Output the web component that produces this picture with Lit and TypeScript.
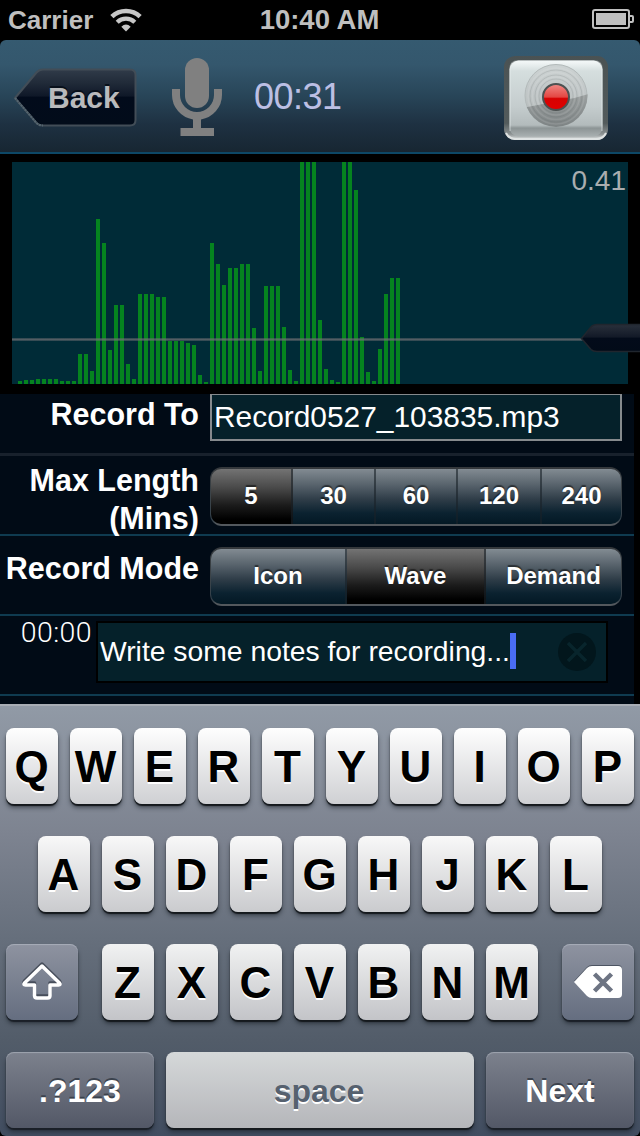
import { LitElement, html, svg, css } from "lit";
import { customElement, property } from "lit/decorators.js";

const LEVELS = [
  3, 4, 4, 5, 5, 5, 5, 3, 3, 3, 30, 30, 13, 165, 141, 34, 79, 79, 20, 5, 90, 90, 90, 87, 87, 43, 43, 43, 41, 39, 9, 2,
  141, 120, 99, 116, 116, 120, 120, 56, 13, 98, 98, 98, 57, 14, 3, 222, 222, 222, 64, 15, 4, 2, 222, 222, 194, 47, 12,
  3, 35, 90, 106, 106,
];

@customElement("status-bar")
class StatusBar extends LitElement {
  static styles = css`
    :host {
      display: grid;
      grid-template-columns: 1fr auto 1fr;
      align-items: center;
      height: 40px;
      padding: 0 6px 0 8px;
      box-sizing: border-box;
      color: #bfbfbf;
      font-size: 26px;
      font-weight: bold;
      background: #000;
    }
    .left { display: flex; align-items: center; gap: 17px; }
    .time { font-size: 27.5px; margin-right: 3px; }
    .battery { justify-self: end; margin-top: -2px; }
    svg { display: block; }
  `;
  render() {
    return html`
      <div class="left">
        <span>Carrier</span>
        <svg width="32" height="26" viewBox="0 0 32 26" fill="none" stroke="#c6c6c6">
          <path d="M1.9 9.7A20.3 20.3 0 0 1 30.1 9.7" stroke-width="4.6" />
          <path d="M7.2 15.2A12.6 12.6 0 0 1 24.8 15.2" stroke-width="4.3" />
          <path d="M16 24.500L11.3 19.7Q16 15.2 20.7 19.7Z" fill="#c6c6c6" stroke="none" />
        </svg>
      </div>
      <span class="time">10:40 AM</span>
      <svg class="battery" width="42" height="20" viewBox="0 0 42 20">
        <rect x="1" y="1" width="36" height="18" rx="2" fill="none" stroke="#bfbfbf" stroke-width="2" />
        <rect x="4" y="4" width="30" height="12" fill="#bfbfbf" />
        <path d="M37 7H40Q41 7 41 8V12Q41 13 40 13H37" fill="none" stroke="#bfbfbf" stroke-width="2" />
      </svg>
    `;
  }
}

@customElement("nav-header")
class NavHeader extends LitElement {
  static styles = css`
    :host {
      display: flex;
      align-items: flex-start;
      height: 114px;
      box-sizing: border-box;
      padding: 15px 30px 0 12px;
      border-bottom: 2px solid #0d4867;
      border-radius: 6px 6px 0 0;
      background: linear-gradient(#355a70 0%, #34576d 22%, #284558 50%, #1e3142 75%, #172632 100%);
    }
    svg { display: block; }
    .back { display: grid; width: 126px; margin-top: 11px; }
    .back > * { grid-area: 1 / 1; }
    .label {
      align-self: center;
      padding-left: 36px;
      margin-top: -1px;
      color: #b9babc;
      font-size: 30px;
      font-weight: bold;
      text-shadow: 0 -2px 0 #08101b;
    }
    .mic { margin: 3px 0 0 34px; }
    .elapsed { margin: 21px auto 0 32px; color: #bcbfe4; font-size: 36px; line-height: 42px; letter-spacing: -0.5px; }
  `;
  render() {
    return html`
      <div class="back">
        <svg width="126" height="64" viewBox="0 0 126 64">
          <defs>
            <linearGradient id="b" x1="0" y1="0" x2="0" y2="1">
              <stop offset="0" stop-color="#303b49" />
              <stop offset=".25" stop-color="#202a38" />
              <stop offset=".47" stop-color="#0f1828" />
              <stop offset=".5" stop-color="#020b1b" />
              <stop offset="1" stop-color="#020c1a" />
            </linearGradient>
          </defs>
          <path d="M3 32L24.500 6.500Q27 3.500 31 3.500H118Q123.500 3.500 123.500 9V54Q123.500 59.500 118 59.500H31Q27 59.500 24.500 57Z"
            fill="url(#b)" stroke="#424d57" stroke-width="2" />
          <path d="M3 32L24.500 57Q27 59.500 31 59.500" fill="none" stroke="#54656f" stroke-width="2" stroke-dasharray="2 1" />
        </svg>
        <span class="label">Back</span>
      </div>
      <svg class="mic" width="50" height="78" viewBox="0 0 50 78" fill="#808080">
        <rect x="13" y="0" width="24" height="50" rx="12" />
        <path d="M0 31H8V37A17 17 0 0 0 42 37V31H50V37A25 25 0 0 1 29 61.500V70H42V78H8.500V70H21V61.500A25 25 0 0 1 0 37Z" />
      </svg>
      <div class="elapsed">00:31</div>
      <svg width="106" height="88" viewBox="0 0 106 88">
        <defs>
          <linearGradient id="frame" x1="0" y1="0" x2="0" y2="1">
            <stop offset="0" stop-color="#4a5253" /><stop offset=".8" stop-color="#535b5c" />
            <stop offset=".93" stop-color="#8c9293" /><stop offset="1" stop-color="#e8ecec" />
          </linearGradient>
          <linearGradient id="face" x1="0" y1="0" x2="0" y2="1">
            <stop offset="0" stop-color="#f6fafa" /><stop offset=".14" stop-color="#d5dede" />
            <stop offset=".6" stop-color="#c5cdce" /><stop offset=".85" stop-color="#b3bbbc" />
            <stop offset=".89" stop-color="#8c9495" /><stop offset="1" stop-color="#a9b0b1" />
          </linearGradient>
          <linearGradient id="red" x1="0" y1="0" x2="0" y2="1">
            <stop offset="0" stop-color="#f08a86" /><stop offset=".5" stop-color="#e44743" />
            <stop offset=".56" stop-color="#d60202" /><stop offset="1" stop-color="#e00000" />
          </linearGradient>
          <linearGradient id="disc" x1="0" y1="0" x2="0" y2="1">
            <stop offset="0" stop-color="#cdd3d3" /><stop offset="1" stop-color="#b0b6b7" />
          </linearGradient>
          <linearGradient id="shade" x1="0" y1="0" x2="0" y2="1">
            <stop offset=".5" stop-color="#9a9f9f" /><stop offset="1" stop-color="#7d8384" />
          </linearGradient>
          <clipPath id="low"><path d="M18 53Q34 50 52 46.500Q70 44 88 38V80H18Z" /></clipPath>
        </defs>
        <rect x="0" y="1" width="104" height="84" rx="11" fill="url(#frame)" />
        <path d="M2 78Q5 84 12 84H92Q99 84 102 78" fill="none" stroke="#dfe3e3" stroke-width="2" />
        <rect x="5.500" y="5.500" width="93" height="76" rx="9" fill="url(#face)" />
        <path d="M6 76V14Q6 6 14 6H90Q98 6 98 14V76" fill="none" stroke="#eef2f2" stroke-opacity=".4" stroke-width="1.500" />
        <circle cx="52" cy="40.500" r="31" fill="url(#disc)" stroke="#b3baba" />
        <g clip-path="url(#low)"><circle cx="52" cy="40.500" r="31.500" fill="url(#shade)" /></g>
        <g fill="none" stroke="#fff" stroke-opacity=".1" stroke-width="1.500">
          <circle cx="52" cy="41" r="28" /><circle cx="52" cy="41" r="23.500" /><circle cx="52" cy="41" r="19" />
        </g>
        <g fill="none" stroke="#59605f" stroke-opacity=".16">
          <circle cx="52" cy="41" r="26" /><circle cx="52" cy="41" r="21" /><circle cx="52" cy="41" r="17" />
        </g>
        <circle cx="52" cy="42" r="13" fill="url(#red)" stroke="#4d5252" stroke-width="2" />
      </svg>
    `;
  }
}

@customElement("wave-meter")
class WaveMeter extends LitElement {
  static styles = css`
    :host { display: block; height: 240px; padding: 8px 12px 10px; box-sizing: border-box; background: #000; position: relative; }
    .plot {
      display: flex;
      align-items: flex-end;
      gap: 2px;
      height: 222px;
      padding-left: 6px;
      box-sizing: border-box;
      background: #002b37;
    }
    .bar { width: 4px; flex: none; background: #05831f; }
    .value { margin-left: auto; align-self: flex-start; padding: 2px 2px 0 0; color: #a9adaf; font-size: 28px; line-height: 34px; }
    .threshold { position: absolute; left: 12px; right: 12px; top: 184px; height: 3px; background: linear-gradient(rgba(115, 112, 116, 0.35), rgba(115, 112, 116, 0.72), rgba(115, 112, 116, 0.35)); }
    .thumb { position: absolute; right: 0; top: 169px; display: block; }
  `;
  render() {
    return html`
      <div class="plot">
        ${LEVELS.map((v) => html`<div class="bar" style="height:${v}px"></div>`)}
        <span class="value">0.41</span>
      </div>
      <div class="threshold"></div>
      <svg class="thumb" width="60" height="31" viewBox="0 0 60 31">
        <defs>
          <linearGradient id="t" x1="0" y1="0" x2="0" y2="1">
            <stop offset="0" stop-color="#29303b" /><stop offset=".47" stop-color="#121927" />
            <stop offset=".5" stop-color="#030b1a" /><stop offset="1" stop-color="#020b18" />
          </linearGradient>
        </defs>
        <path d="M1.500 15.500L11 4Q13 1.500 17 1.500H61V28.500H17Q13 28.500 11 26.500Z" fill="url(#t)" stroke="#20262e" stroke-width="1.500" />
      </svg>
    `;
  }
}

@customElement("segment-control")
class SegmentControl extends LitElement {
  @property({ attribute: false }) items: { label: string; width: number }[] = [];
  @property({ type: Number }) selected = 0;
  static styles = css`
    :host {
      display: flex;
      width: 412px;
      height: 59px;
      box-sizing: border-box;
      padding: 2px 1px;
      border-radius: 12px;
      overflow: hidden;
      background: linear-gradient(#34383c, #3c4449 50%, #33404a 90%, #53585d 96%);
    }
    .seg {
      display: flex;
      align-items: center;
      justify-content: center;
      box-sizing: border-box;
      flex: none;
      border-right: 2px solid rgba(25, 33, 40, 0.6);
      padding: 0 0 2px 0;
      color: #fff;
      font-size: 24px;
      font-weight: bold;
      background: linear-gradient(#828b92, #59646d 28%, #2f3d48 55%, #0b2230 80%, #031824);
      text-shadow: 0 -2px 1px rgba(0, 0, 0, 0.5);
    }
    .seg:first-child { border-radius: 10px 0 0 10px; }
    .seg:last-child { border-right: none; border-radius: 0 10px 10px 0; }
    .on { background: linear-gradient(#737373, #484848 35%, #1c1c1c 65%, #000 92%); }
  `;
  render() {
    return this.items.map(
      (it, i) => html`<div class="seg ${i === this.selected ? "on" : ""}" style="width:${it.width}px">${it.label}</div>`
    );
  }
}

@customElement("record-form")
class RecordForm extends LitElement {
  static styles = css`
    :host { display: block; height: 310px; padding-right: 6px; box-sizing: border-box; background: #000; overflow: hidden; }
    .rows { height: 310px; background: #010b16; }
    .row { display: flex; align-items: flex-start; height: 80px; box-sizing: border-box; border-bottom: 2px solid #0f3b50; }
    .first { height: 62px; border-bottom: 3px solid #18212c; }
    .label {
      width: 199px;
      flex: none;
      margin-right: 11px;
      text-align: right;
      color: #fff;
      font-size: 30.5px;
      font-weight: bold;
      line-height: 38px;
      white-space: nowrap;
    }
    .first .label { margin-top: 1px; }
    .length .label { margin-top: 5px; }
    .mode .label { margin-top: 13px; }
    segment-control { margin-top: 11px; }
    .file {
      width: 412px;
      height: 47px;
      box-sizing: border-box;
      padding-left: 2px;
      border: 2px solid #868a8d;
      border-top-width: 1px;
      background: #05212a;
      color: #fff;
      font-size: 29.9px;
      line-height: 44px;
    }
    .stamp { width: 96px; flex: none; padding-right: 4px; box-sizing: border-box; text-align: right; color: #fff; font: 300 28.5px/34px Roboto, "Liberation Sans", sans-serif; letter-spacing: 0.4px; }
    .note {
      display: flex;
      align-items: center;
      width: 512px;
      height: 62px;
      margin-top: 5px;
      box-sizing: border-box;
      padding: 0 10px 1px 2px;
      border: 2px solid #000;
      background: #05212a;
      color: #fff;
      font-size: 28.3px;
      white-space: nowrap;
    }
    .caret { width: 6px; height: 36px; margin-bottom: 1px; background: #4a6cf4; }
    .clear { margin-left: auto; }
  `;
  render() {
    return html`
      <div class="rows">
        <div class="row first">
          <div class="label">Record To</div>
          <div class="file">Record0527_103835.mp3</div>
        </div>
        <div class="row length">
          <div class="label">Max Length<br />(Mins)</div>
          <segment-control
            .items=${[{ label: "5", width: 82 }, { label: "30", width: 83 }, { label: "60", width: 82 }, { label: "120", width: 84 }, { label: "240", width: 79 }]}
            .selected=${0}
          ></segment-control>
        </div>
        <div class="row mode">
          <div class="label">Record Mode</div>
          <segment-control
            .items=${[{ label: "Icon", width: 136 }, { label: "Wave", width: 139 }, { label: "Demand", width: 135 }]}
            .selected=${1}
          ></segment-control>
        </div>
        <div class="row">
          <div class="stamp">00:00</div>
          <div class="note">
            <span>Write some notes for recording...</span><span class="caret"></span>
            <svg class="clear" width="38" height="38" viewBox="0 0 38 38">
              <circle cx="19" cy="19" r="19" fill="#02161c" />
              <path d="M10 10L28 28M28 10L10 28" stroke="#08252c" stroke-width="3.500" />
            </svg>
          </div>
        </div>
      </div>
    `;
  }
}

@customElement("key-board")
class KeyBoard extends LitElement {
  static styles = css`
    :host { display: block; height: 432px; background: #000; }
    .board {
      display: flex;
      flex-direction: column;
      gap: 32px;
      height: 432px;
      box-sizing: border-box;
      padding: 22px 6px 0;
      border-top: 2px solid #a9aeb5;
      border-radius: 0 0 6px 6px;
      background: linear-gradient(#919aa6, #7d8390 30%, #666f7c 54%, #525c69 78%, #414d60);
    }
    .row { display: flex; justify-content: center; gap: 12px; height: 76px; }
    .key {
      display: flex;
      align-items: center;
      justify-content: center;
      width: 52px;
      flex: none;
      box-sizing: border-box;
      padding: 1px 1px 0 0;
      border-radius: 8px;
      color: #000;
      font-size: 44px;
      font-weight: bold;
      text-shadow: 0 2px 0 #fff;
      background: linear-gradient(#fefefe, #cfd0d3);
      box-shadow: 0 2px 1px #15191d, 0 4px 4px rgba(20, 25, 32, 0.5);
    }
    .second .key { background: linear-gradient(#f8f8f8, #cacbce); }
    .third .key { background: linear-gradient(#f1f2f2, #c3c4c8); }
    .third .mod { width: 72px; padding: 0; background: linear-gradient(#8e93a0, #656e80); }
    .third .shift { margin-right: 12px; }
    .third .delete { margin-left: 12px; }
    .fourth .mod {
      width: 148px;
      padding: 2px 0 0;
      font-size: 32px;
      background: linear-gradient(#7c818d, #535867);
    }
    .row .mod {
      color: #fff;
      text-shadow: 0 -2px 0 #3b424d;
      box-shadow: inset 0 1px 1px rgba(190, 195, 205, 0.55), 0 2px 1px #1a1f27, 0 4px 4px rgba(20, 25, 32, 0.5);
    }
    .fourth .space { width: 308px; padding: 2px 2px 0 0; color: #56616f; font-size: 32px; background: linear-gradient(#d5d8d9, #b5b6ba); }
    svg { display: block; overflow: visible; }
  `;
  private keys(s: string) {
    return [...s].map((k) => html`<div class="key">${k}</div>`);
  }
  render() {
    const arrow = "M20 2L37.500 19Q39 21 36.500 21H28V31.500Q28 34 25.500 34H15Q12.500 34 12.500 31.500V21H3.500Q1 21 2.500 19Z";
    return html`
      <div class="board">
        <div class="row">${this.keys("QWERTYUIOP")}</div>
        <div class="row second">${this.keys("ASDFGHJKL")}</div>
        <div class="row third">
          <div class="key mod shift">
            <svg width="40" height="36" viewBox="0 0 40 36" fill="none" stroke-width="3.500" stroke-linejoin="round">
              ${svg`<path d=${arrow} stroke="#474e5b" transform="translate(0 -2)" /><path d=${arrow} stroke="#fff" />`}
            </svg>
          </div>
          ${this.keys("ZXCVBNM")}
          <div class="key mod delete">
            <svg width="48" height="32" viewBox="0 0 48 32">
              <path d="M0 15L13 1Q15 -1 18 -1H44Q48 -1 48 3V27" fill="#4c5462" />
              <path d="M0 16L13 30Q15 32 18 32H44Q48 32 48 28V4Q48 0 44 0H18Q15 0 13 2Z" fill="#fff" />
              <path d="M20.500 8L37.500 25M37.500 8L20.500 25" stroke="#6d7483" stroke-width="4.500" />
            </svg>
          </div>
        </div>
        <div class="row fourth">
          <div class="key mod">.?123</div>
          <div class="key space">space</div>
          <div class="key mod">Next</div>
        </div>
      </div>
    `;
  }
}

@customElement("app-root")
class AppRoot extends LitElement {
  static styles = css`
    :host {
      display: block;
      width: 640px;
      height: 1136px;
      overflow: hidden;
      background: #000;
      font-family: "Liberation Sans", Arial, sans-serif;
    }
  `;
  render() {
    return html`
      <status-bar></status-bar>
      <nav-header></nav-header>
      <wave-meter></wave-meter>
      <record-form></record-form>
      <key-board></key-board>
    `;
  }
}
